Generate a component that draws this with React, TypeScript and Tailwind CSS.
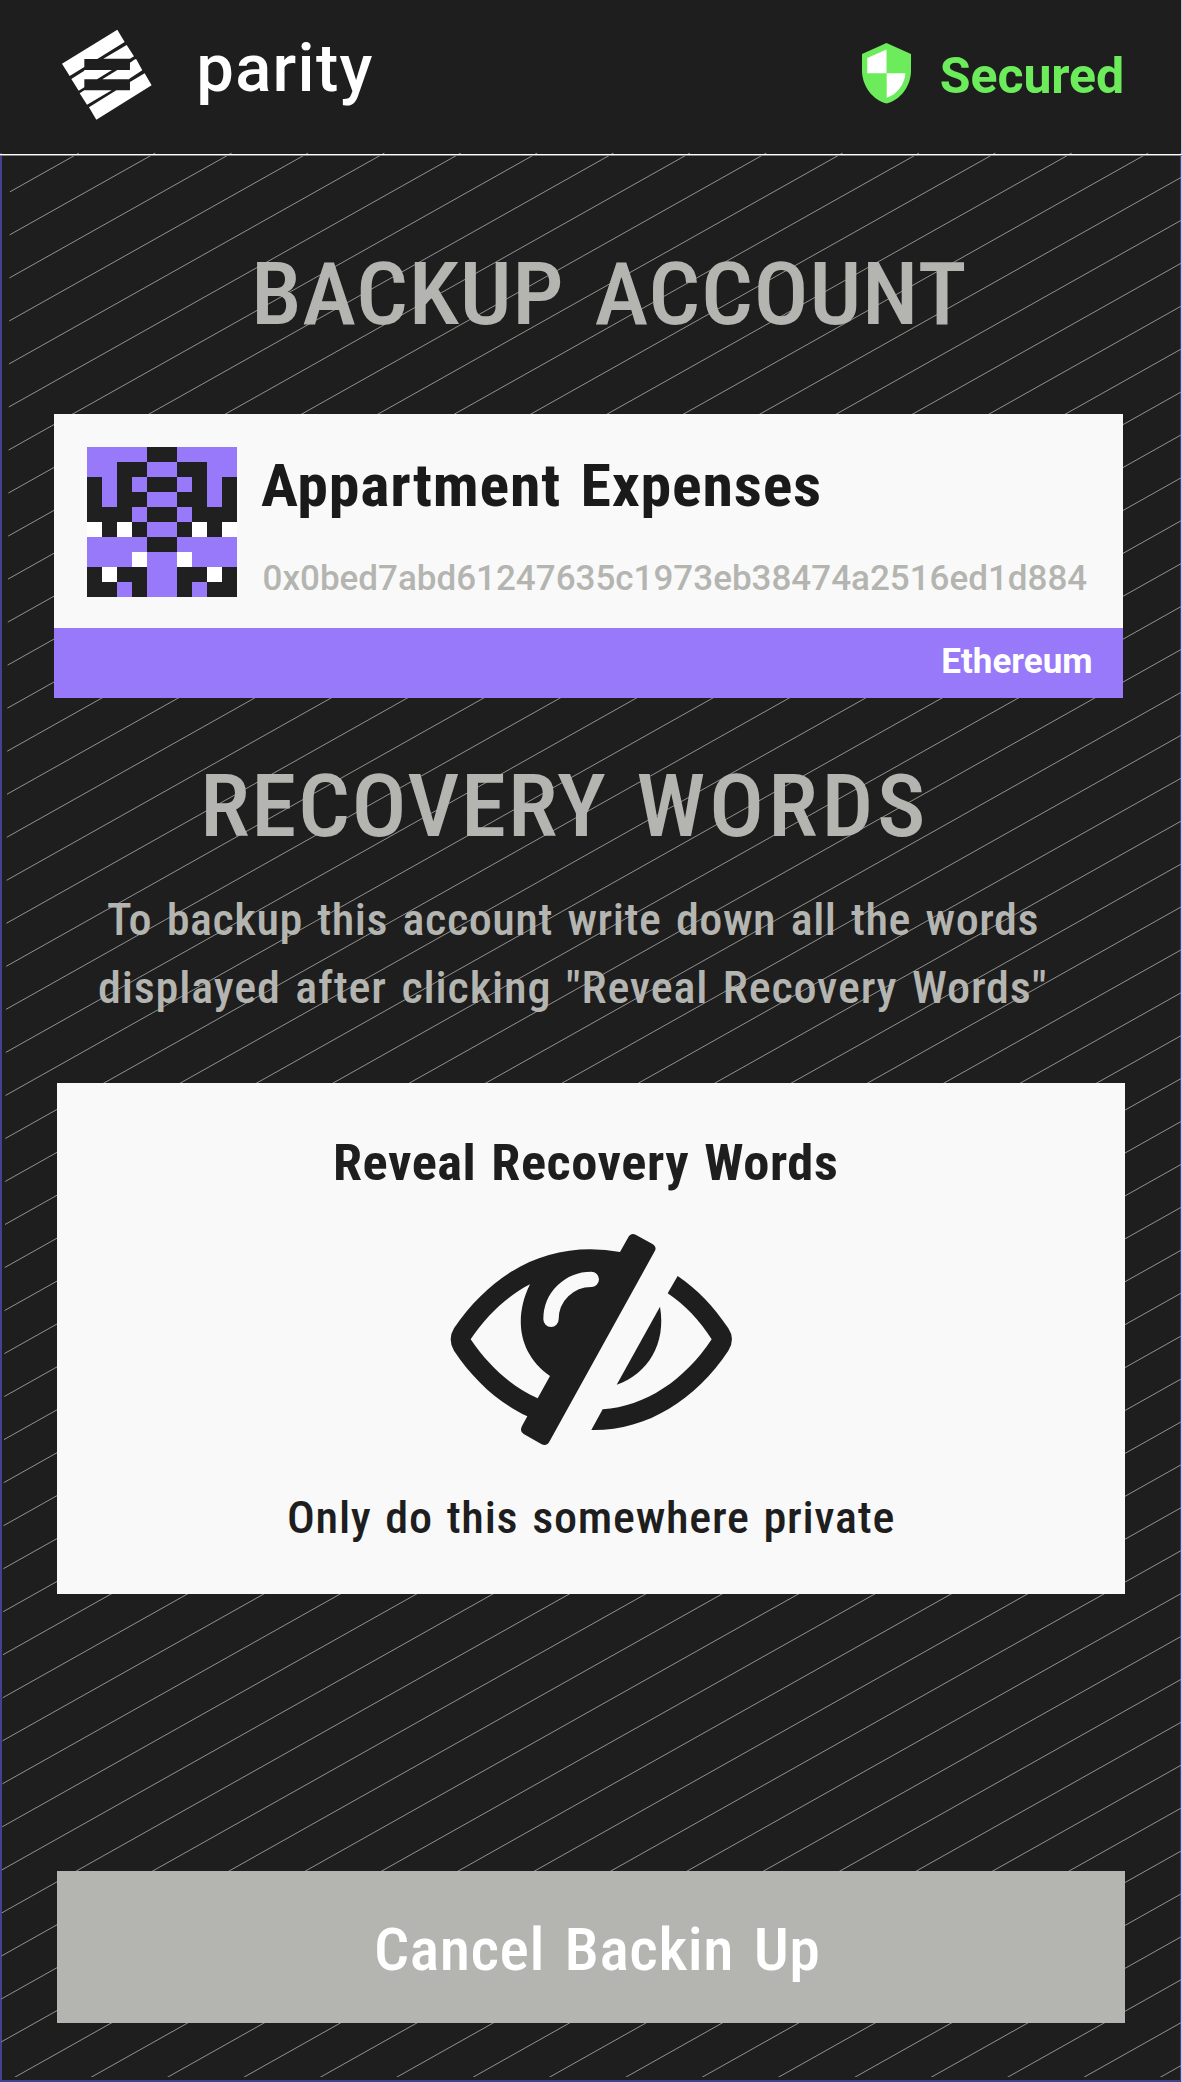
const IDENTICON = [
  'PPPPKKPPPP',
  'PPKKPPKKPP',
  'KPKPKKPKPK',
  'KPKKPPKKPK',
  'KKKPKKPKKK',
  'WKWKPPKWKW',
  'PPPPKKPPPP',
  'PPPWPPWPPP',
  'KWKKPPKKWK',
  'KKPKPPKPKK',
];

const CELL: Record<string, string> = {
  P: 'bg-[#9879f9]',
  K: 'bg-[#202020]',
  W: 'bg-white',
};

function Logo() {
  return (
    <svg viewBox="60 55 280 280" className="h-[93.3px] w-[93.3px]" fill="#fff">
      <polygon points="232,60 254,97 172,148 133,148 133,172 89,199 66,162" />
      <polygon points="260,106 282,140 270,147 190,147" />
      <polygon points="94,208 133,183 133,181 216,181 171,209 133,209 133,233 116,243" />
      <polygon points="307,182 268,207 268,209 187,209 232,181 270,181 270,159 285,149 289,149" />
      <polygon points="141,285 119,251 133,242 215,242" />
      <polygon points="169,330 147,293 229,242 270,242 270,217 314,191 335,227" />
    </svg>
  );
}

function Shield() {
  return (
    <svg viewBox="0 0 49 61" className="h-[61px] w-[49px]">
      <path d="M24.5 0 49 11V27.5C49 43 38.5 57 24.5 60.5 10.500 57 0 43 0 27.500V11Z" fill="#6ceb5b" />
      <path d="M24.500 6.500V30.200H5.300V15Z" fill="#fff" />
      <path d="M24.700 30.200H43.500C42.300 41.500 35 51.500 24.700 54.800Z" fill="#fff" />
    </svg>
  );
}

function HiddenEye() {
  return (
    <svg viewBox="0 0 960 750" className="h-[250px] w-[320px]" fill="#1e1e1e">
      <path
        fillRule="evenodd"
        d="M570 126 594 83Q602 68 617 74L666 101Q682 110 674 124L358 695Q350 709 335 703L281 672Q268 664 276 648L292 619C206 578 132 512 72 422Q52 388 72 355C178 200 318 118 482 118Q527 118 570 126ZM300 223C232 258 172 313 122 388C177 469 244 529 323 565L360 498C263 430 252 320 300 223Z"
      />
      <path d="M363 328C363 260 418 208 484 208" fill="none" stroke="#f9f9f9" strokeWidth="46" strokeLinecap="round" />
      <path d="M690 290 560 524C655 490 709 400 690 290Z" />
      <path d="M743 198 713 250C764 284 808 330 845 388C764 511 645 590 518 598L484 660C648 663 796 571 895 422Q917 388 895 355C850 288 800 236 743 198Z" />
    </svg>
  );
}

function Hatching() {
  const lines = Array.from({ length: 64 }, (_, i) => 79 + 76.37 * i);
  return (
    <svg
      className="pointer-events-none absolute inset-0"
      width="1182"
      height="2082"
      viewBox="0 0 1182 2082"
      fill="none"
    >
      <clipPath id="field">
        <polygon points="10,152.500 1181,152.500 1181,2077 1,2077" />
      </clipPath>
      <g clipPath="url(#field)" stroke="#929290" strokeWidth="1">
        {lines.map((x) => (
          <line key={x} x1={x} y1="153" x2={x - 3500} y2={153 + 3500 * 0.5619} />
        ))}
      </g>
    </svg>
  );
}

export default function App() {
  return (
    <div className="relative h-[2082px] w-[1182px] overflow-hidden bg-[#1e1e1e] font-['Roboto',sans-serif] leading-none whitespace-nowrap">
      <div className="absolute inset-x-0 top-[153px] bottom-0 border-x-2 border-b-2 border-[#42438f]" />
      <div className="absolute inset-y-0 right-0 w-px bg-[#c4c4dc]" />
      <Hatching />
      <div className="relative flex h-full flex-col">
        <header className="flex h-[156px] shrink-0 items-start border-b border-[#7f827f] shadow-[inset_0_-1px_0_#fff]">
          <div className="mt-[28.3px] ml-[60px]">
            <Logo />
          </div>
          <div className="mt-[35px] ml-[43px] text-[67px] font-medium tracking-[1.27px] text-white">parity</div>
          <div className="mt-[43px] mr-[29px] ml-auto">
            <Shield />
          </div>
          <div className="mt-[51px] mr-[58px] text-[50px] font-bold tracking-[-0.1px] text-[#6ceb5b]">Secured</div>
        </header>

        <h1 className="mt-[94px] ml-[250.5px] origin-left scale-x-[1.04] self-start text-[88px] font-medium tracking-[0.62px] text-[#b4b5b0] [font-stretch:75%] [word-spacing:8.1px]">
          BACKUP ACCOUNT
        </h1>

        <section className="mt-[76px] ml-[54px] w-[1068.7px] bg-[#f9f9f9]">
          <div className="flex h-[214px] items-start pl-[33px]">
            <div className="mt-[33px] grid w-[150px] grid-cols-10">
              {IDENTICON.join('')
                .split('')
                .map((c, i) => (
                  <div key={i} className={`h-[15px] w-[15px] ${CELL[c]}`} />
                ))}
            </div>
            <div className="ml-[25px] flex flex-col pt-[42px]">
              <div className="-ml-px origin-left scale-x-[1.05] self-start text-[59px] font-bold tracking-[0.75px] text-[#1a1a1a] [font-stretch:75%] [word-spacing:4.2px]">
                Appartment Expenses
              </div>
              <div className="mt-[45.500px] ml-[0.5px] text-[35px] font-medium text-[#b4b5b0]">
                0x0bed7abd61247635c1973eb38474a2516ed1d884
              </div>
            </div>
          </div>
          <div className="flex h-[70px] items-start justify-end bg-[#9879f9] pt-[15.500px] pr-[30px] text-[35px] font-bold text-white">
            Ethereum
          </div>
        </section>

        <h2 className="mt-[63.500px] ml-[200px] origin-left scale-x-[1.04] self-start text-[88px] font-medium tracking-[1.5px] text-[#b4b5b0] [font-stretch:75%] [word-spacing:6px]">
          RECOVERY <span className="tracking-[3.6px]">WORDS</span>
        </h2>
        <p className="mt-[36px] text-[44px] leading-[68px] font-medium text-[#b4b5b0] [font-stretch:75%]">
          <span className="ml-[107px] block w-fit origin-left scale-x-[1.05] tracking-[0.5px] [word-spacing:3.2px]">
            To backup this account write down all the words
          </span>
          <span className="ml-[98px] block w-fit origin-left scale-x-[1.05] tracking-[0.79px] [word-spacing:3px]">
            displayed after clicking "Reveal Recovery Words"
          </span>
        </p>

        <section className="mt-[61.5px] ml-[56.7px] flex h-[511px] w-[1068.8px] shrink-0 flex-col items-start bg-[#f9f9f9] text-[#1e1e1e] [font-stretch:75%]">
          <div className="mt-[54.5px] ml-[276.5px] origin-left scale-x-[1.05] text-[50px] font-bold tracking-[0.5px] [word-spacing:2.3px]">
            Reveal Recovery Words
          </div>
          <div className="mt-[22.5px] ml-[373.3px]">
            <HiddenEye />
          </div>
          <div className="mt-[35.5px] ml-[230.7px] origin-left scale-x-[1.05] text-[44px] font-medium tracking-[0.7px] [word-spacing:2.4px]">
            Only do this somewhere private
          </div>
        </section>

        <button className="mt-[277px] ml-[56.7px] flex h-[152px] w-[1068.8px] shrink-0 items-start bg-[#b4b5b0] pt-[49px] pl-[317.800px] text-[59px] leading-none font-medium text-white">
          <span className="origin-left scale-x-[1.05] tracking-[0.48px] [font-stretch:75%] [word-spacing:4.7px]">
            Cancel Backin Up
          </span>
        </button>
      </div>
    </div>
  );
}
